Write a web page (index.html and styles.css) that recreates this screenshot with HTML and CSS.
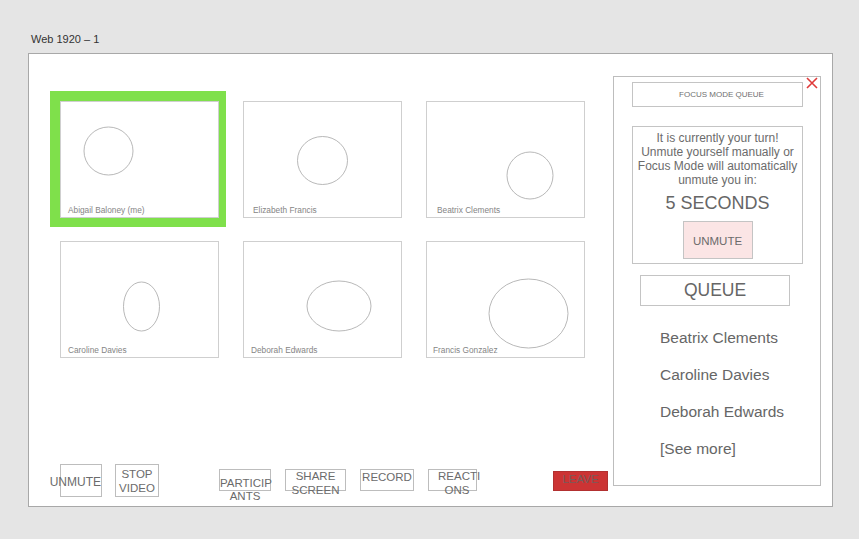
FILE: index.html
```html
<!DOCTYPE html>
<html lang="en">
<head>
<meta charset="utf-8">
<title>Web 1920 – 1</title>
<link rel="stylesheet" href="styles.css">
</head>
<body>
<div class="frame-label">Web 1920 – 1</div>
<div class="artboard">
  <div class="stage">
    <div class="grid">
      <div class="focus">
        <div class="tile">
          <svg class="cam" viewBox="0 0 157 115"><ellipse cx="47.5" cy="49" rx="24.5" ry="24"/></svg>
          <span class="name">Abigail Baloney (me)</span>
        </div>
      </div>
      <div class="tile">
        <svg class="cam" viewBox="0 0 157 115"><ellipse cx="78.5" cy="58.5" rx="25" ry="24"/></svg>
        <span class="name name-wide">Elizabeth Francis</span>
      </div>
      <div class="tile">
        <svg class="cam" viewBox="0 0 157 115"><ellipse cx="103" cy="73.5" rx="23" ry="23.5"/></svg>
        <span class="name name-wider">Beatrix Clements</span>
      </div>
      <div class="tile">
        <svg class="cam" viewBox="0 0 157 115"><ellipse cx="80.5" cy="64.5" rx="18" ry="24.5"/></svg>
        <span class="name">Caroline Davies</span>
      </div>
      <div class="tile">
        <svg class="cam" viewBox="0 0 157 115"><ellipse cx="95" cy="64" rx="32" ry="25"/></svg>
        <span class="name">Deborah Edwards</span>
      </div>
      <div class="tile">
        <svg class="cam" viewBox="0 0 157 115"><ellipse cx="101.5" cy="71.5" rx="39.5" ry="34.5"/></svg>
        <span class="name name-narrow">Francis Gonzalez</span>
      </div>
    </div>
    <div class="toolbar">
      <div class="tb tb-unmute">UNMUTE</div>
      <div class="tb tb-video">STOP<br>VIDEO</div>
      <div class="tb tb-small tb-participants">PARTICIP<br>ANTS</div>
      <div class="tb tb-small tb-share">SHARE<br>SCREEN</div>
      <div class="tb tb-small tb-record">RECORD</div>
      <div class="tb tb-small tb-reactions">REACTI<br>ONS</div>
      <div class="tb tb-leave">LEAVE</div>
    </div>
  </div>
  <aside class="panel">
    <svg class="close" viewBox="0 0 12 12"><path d="M1 1 L11 11 M11 1 L1 11"/></svg>
    <div class="panel-title">FOCUS MODE QUEUE</div>
    <div class="turn">
      <p class="turn-text">It is currently your turn!<br>Unmute yourself manually or<br>Focus Mode will automatically<br>unmute you in:</p>
      <div class="countdown">5 SECONDS</div>
      <div class="turn-btn">UNMUTE</div>
    </div>
    <div class="queue-title">QUEUE</div>
    <ul class="queue">
      <li>Beatrix Clements</li>
      <li>Caroline Davies</li>
      <li>Deborah Edwards</li>
      <li>[See more]</li>
    </ul>
  </aside>
</div>
</body>
</html>
```

FILE: styles.css
```css
html, body {
  margin: 0;
  padding: 0;
}

body {
  background: #e5e5e5;
  font-family: "Liberation Sans", Arial, sans-serif;
  color: #666;
  width: 859px;
  height: 539px;
  overflow: hidden;
}

.frame-label {
  padding: 33px 0 0 31px;
  font-size: 11px;
  line-height: 13px;
  color: #333;
}

.artboard {
  margin: 7px 0 0 28px;
  width: 805px;
  height: 454px;
  box-sizing: border-box;
  border: 1px solid #a8a8a8;
  background: #fff;
  display: flex;
  align-items: flex-start;
}

.stage {
  margin-left: 31px;
  padding-top: 47px;
  display: flex;
  flex-direction: column;
}

.grid {
  display: grid;
  grid-template-columns: 159px 159px 159px;
  grid-template-rows: 117px 117px;
  column-gap: 24px;
  row-gap: 23px;
}

.focus {
  margin: -10px -7px -9px -10px;
  padding: 10px 7px 9px 10px;
  background: #7fe04b;
}

.tile {
  display: grid;
  width: 159px;
  height: 117px;
  box-sizing: border-box;
  border: 1px solid #cfcfcf;
  background: #fff;
}

.tile > * {
  grid-area: 1 / 1;
}

.cam {
  display: block;
  width: 157px;
  height: 115px;
}

.cam ellipse {
  fill: none;
  stroke: #a6a6a6;
  stroke-width: 0.8;
}

.name {
  align-self: end;
  font-size: 8.3px;
  line-height: 10px;
  padding: 0 0 2px 7px;
  color: #858585;
  white-space: nowrap;
}

.name-wide {
  padding-left: 9px;
}

.name-wider {
  padding-left: 10px;
}

.name-narrow {
  padding-left: 6px;
}

.toolbar {
  display: flex;
  align-items: flex-start;
  margin-top: 106px;
}

.tb {
  box-sizing: border-box;
  border: 1px solid #bdbdbd;
  font-size: 11.5px;
  line-height: 14px;
  color: #6b6b6b;
  text-align: center;
  white-space: nowrap;
  margin-left: 14px;
}

.tb-unmute {
  margin-left: 0;
  width: 42px;
  height: 33px;
  display: flex;
  align-items: center;
  justify-content: flex-end;
  padding-top: 2px;
  font-size: 12px;
}

.tb-video {
  margin-left: 13px;
  width: 44px;
  height: 33px;
  display: flex;
  align-items: center;
  justify-content: center;
}

.tb-small {
  margin-top: 5px;
  height: 22px;
}

.tb-participants {
  margin-left: 60px;
  width: 52px;
  padding-top: 7px;
  line-height: 12.5px;
}

.tb-share {
  width: 61px;
  line-height: 13.5px;
}

.tb-record {
  width: 54px;
}

.tb-reactions {
  width: 49px;
  padding-left: 9px;
  line-height: 13.5px;
}

.tb-leave {
  margin-left: 76px;
  margin-top: 7px;
  width: 55px;
  height: 20px;
  border-color: #b23030;
  background: #cc3434;
  color: #7a5a5a;
  font-size: 11.5px;
  line-height: 14px;
}

.panel {
  position: relative;
  margin: 22px 11px 0 auto;
  width: 208px;
  height: 410px;
  box-sizing: border-box;
  border: 1px solid #bdbdbd;
  display: flex;
  flex-direction: column;
  align-items: flex-start;
}

.close {
  position: absolute;
  top: 0;
  left: 192px;
  width: 12px;
  height: 12px;
}

.close path {
  fill: none;
  stroke: #e03a3a;
  stroke-width: 1.6;
}

.panel-title {
  margin: 5px 0 0 18px;
  width: 171px;
  height: 25px;
  box-sizing: border-box;
  border: 1px solid #c4c4c4;
  padding-left: 8px;
  font-size: 8px;
  line-height: 23px;
  text-align: center;
  color: #707070;
}

.turn {
  margin: 19px 0 0 18px;
  width: 171px;
  height: 138px;
  box-sizing: border-box;
  border: 1px solid #c4c4c4;
  padding-top: 4px;
  display: flex;
  flex-direction: column;
  align-items: center;
}

.turn-text {
  margin: 0;
  font-size: 12px;
  line-height: 14px;
  text-align: center;
  white-space: nowrap;
  color: #6b6b6b;
}

.countdown {
  margin-top: 5px;
  font-size: 18px;
  line-height: 22px;
  color: #666;
}

.turn-btn {
  margin-top: 7px;
  width: 70px;
  height: 38px;
  box-sizing: border-box;
  border: 1px solid #c4c4c4;
  background: #fbe5e5;
  display: flex;
  align-items: center;
  justify-content: center;
  padding-top: 2px;
  font-size: 11.5px;
  color: #6b6b6b;
}

.queue-title {
  margin: 11px 0 0 26px;
  width: 150px;
  height: 31px;
  box-sizing: border-box;
  border: 1px solid #c4c4c4;
  font-size: 17.5px;
  line-height: 29px;
  text-align: center;
  color: #666;
}

.queue {
  list-style: none;
  margin: 13px 0 0 46px;
  padding: 0;
  font-size: 15.5px;
  line-height: 37px;
  color: #666;
}
```
